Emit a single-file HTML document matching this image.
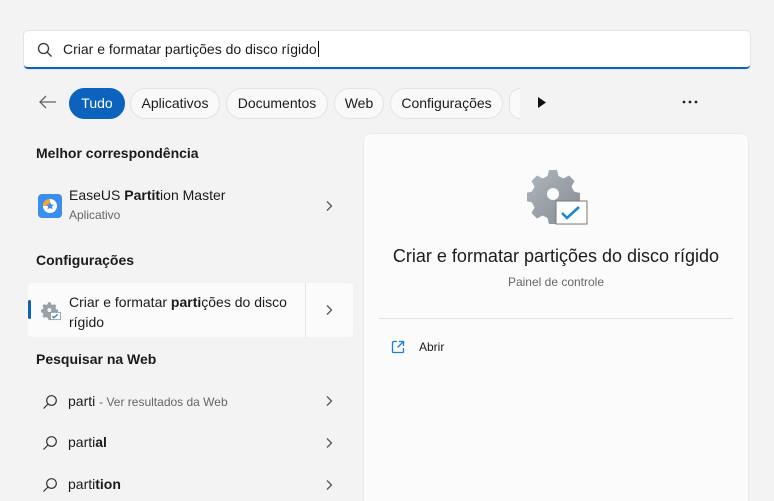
<!DOCTYPE html>
<html style="width:774px;height:501px;overflow:hidden"><head><meta charset="utf-8"><style>
*{margin:0;padding:0;box-sizing:border-box}
body{width:774px;height:501px;overflow:hidden;background:#f3f3f3;font-family:"Segoe UI","Liberation Sans",sans-serif;color:#1b1b1b;position:relative;font-size:13px}
.abs{position:absolute}
.search{left:24px;top:31px;width:726px;height:38px;background:#fff;border-radius:4px;border-bottom:2px solid #0a64b8;box-shadow:0 0 0 1px #e5e5e5}
.search span{position:absolute;left:39px;top:10px;font-size:14px;color:#1b1b1b}
.chip{position:absolute;top:88px;height:31px;border-radius:16px;background:#f9f9f9;border:1px solid #e3e3e3;font-size:14px;line-height:29px;text-align:center}
.h{position:absolute;left:36px;font-size:14px;font-weight:bold;color:#1b1b1b}
.panel{left:363px;top:133px;width:386px;height:368px;background:#fbfbfb;border-radius:8px 8px 0 0;border:1px solid #ececec;border-bottom:none}
.web{position:absolute;left:68px;font-size:14px}
</style></head><body>
<div class="abs search">
<svg class="abs" style="left:13px;top:11px" width="16" height="16" viewBox="0 0 16 16"><circle cx="6.5" cy="6.5" r="5" fill="none" stroke="#333" stroke-width="1.3"/><line x1="10.2" y1="10.2" x2="14.5" y2="14.5" stroke="#333" stroke-width="1.3"/></svg>
<span>Criar e formatar partições do disco rígido<span style="position:static;border-left:1px solid #000;margin-left:1px"></span></span>
</div>
<svg class="abs" style="left:38px;top:94px" width="20" height="16" viewBox="0 0 20 16"><path d="M18 8H2M8 2L2 8l6 6" fill="none" stroke="#666" stroke-width="1.3"/></svg>
<div class="chip" style="left:69px;width:56px;background:#0b63bd;border-color:#0b63bd;color:#fff">Tudo</div>
<div class="chip" style="left:130px;width:90px">Aplicativos</div>
<div class="chip" style="left:226px;width:102px">Documentos</div>
<div class="chip" style="left:334px;width:50px">Web</div>
<div class="chip" style="left:390px;width:113px">Configurações</div>
<div class="chip" style="left:509px;width:11px;border-right:none;border-radius:16px 0 0 16px"></div>
<svg class="abs" style="left:537px;top:96px" width="10" height="13" viewBox="0 0 10 13"><path d="M1 1L9 6.5L1 12Z" fill="#111"/></svg>
<svg class="abs" style="left:682px;top:100px" width="16" height="4" viewBox="0 0 16 4"><circle cx="2" cy="2" r="1.4" fill="#222"/><circle cx="8" cy="2" r="1.4" fill="#222"/><circle cx="14" cy="2" r="1.4" fill="#222"/></svg>

<div class="h" style="top:145px">Melhor correspondência</div>
<svg class="abs" style="left:38px;top:194px" width="24" height="24" viewBox="0 0 24 24"><rect width="24" height="24" rx="4" fill="#3b8ef0"/><circle cx="12" cy="12" r="7" fill="#fff"/><path d="M12 12V5A7 7 0 0 0 5 12Z" fill="#f5a623"/><path d="M12 8l1.2 2.5 2.7.3-2 1.8.6 2.7L12 14l-2.5 1.3.6-2.7-2-1.8 2.7-.3Z" fill="#3b8ef0"/></svg>
<div class="abs" style="left:69px;top:187px;font-size:14px">EaseUS <b>Partit</b>ion Master</div>
<div class="abs" style="left:69px;top:208px;font-size:12px;color:#666">Aplicativo</div>
<svg class="abs" style="left:325px;top:200px" width="8" height="12" viewBox="0 0 8 12"><path d="M2 1.5L6.5 6L2 10.5" fill="none" stroke="#555" stroke-width="1.3"/></svg>

<div class="h" style="top:252px">Configurações</div>
<div class="abs" style="left:28px;top:283px;width:325px;height:54px;background:#fbfbfb;border-radius:4px"></div>
<div class="abs" style="left:305px;top:283px;width:1px;height:54px;background:#e5e5e5"></div>
<div class="abs" style="left:28px;top:300px;width:3px;height:19px;background:#0a64b8;border-radius:2px"></div>
<svg class="abs" style="left:41px;top:301px" width="20" height="20" viewBox="0 0 62 58"><path d="M22 2h8l1.5 6 5 2.5 5.5-3 5.5 5.5-3 5.5 2.5 5 6 1.5v8l-6 1.5-2.5 5 3 5.5-5.5 5.5-5.5-3-5 2.5-1.5 6h-8l-1.5-6-5-2.5-5.5 3-5.5-5.5 3-5.5-2.5-5-6-1.5v-8l6-1.5 2.5-5-3-5.5 5.5-5.5 5.5 3 5-2.5Z" fill="#9aa0a7"/><circle cx="26" cy="26" r="6" fill="#fbfbfb"/><rect x="29" y="33" width="31" height="23" fill="#fff" stroke="#777" stroke-width="2"/><path d="M35 45l5 5 12-11" fill="none" stroke="#1a86d8" stroke-width="4"/></svg>
<div class="abs" style="left:69px;top:292px;font-size:14px;line-height:20px">Criar e formatar <b>parti</b>ções do disco<br>rígido</div>
<svg class="abs" style="left:325px;top:304px" width="8" height="12" viewBox="0 0 8 12"><path d="M2 1.5L6.5 6L2 10.5" fill="none" stroke="#555" stroke-width="1.3"/></svg>

<div class="h" style="top:351px">Pesquisar na Web</div>
<svg class="abs" style="left:42px;top:394px" width="16" height="16" viewBox="0 0 16 16"><circle cx="9.5" cy="6.5" r="4.8" fill="none" stroke="#333" stroke-width="1.2"/><line x1="6" y1="10" x2="1.5" y2="14.5" stroke="#333" stroke-width="1.2"/></svg>
<div class="web" style="top:393px">parti <span style="font-size:12px;color:#666">- Ver resultados da Web</span></div>
<svg class="abs" style="left:325px;top:395px" width="8" height="12" viewBox="0 0 8 12"><path d="M2 1.5L6.5 6L2 10.5" fill="none" stroke="#555" stroke-width="1.3"/></svg>
<svg class="abs" style="left:42px;top:435px" width="16" height="16" viewBox="0 0 16 16"><circle cx="9.5" cy="6.5" r="4.8" fill="none" stroke="#333" stroke-width="1.2"/><line x1="6" y1="10" x2="1.5" y2="14.5" stroke="#333" stroke-width="1.2"/></svg>
<div class="web" style="top:434px">parti<b>al</b></div>
<svg class="abs" style="left:325px;top:437px" width="8" height="12" viewBox="0 0 8 12"><path d="M2 1.5L6.5 6L2 10.5" fill="none" stroke="#555" stroke-width="1.3"/></svg>
<svg class="abs" style="left:42px;top:477px" width="16" height="16" viewBox="0 0 16 16"><circle cx="9.5" cy="6.5" r="4.8" fill="none" stroke="#333" stroke-width="1.2"/><line x1="6" y1="10" x2="1.5" y2="14.5" stroke="#333" stroke-width="1.2"/></svg>
<div class="web" style="top:476px">parti<b>tion</b></div>
<svg class="abs" style="left:325px;top:479px" width="8" height="12" viewBox="0 0 8 12"><path d="M2 1.5L6.5 6L2 10.5" fill="none" stroke="#555" stroke-width="1.3"/></svg>

<div class="abs panel"></div>
<svg class="abs" style="left:527px;top:168px" width="62" height="58" viewBox="0 0 62 58"><defs><linearGradient id="g" x1="0" y1="0" x2="1" y2="1"><stop offset="0" stop-color="#b0b6bd"/><stop offset="1" stop-color="#868c94"/></linearGradient></defs>
<path d="M22 2h8l1.5 6 5 2.5 5.5-3 5.5 5.5-3 5.5 2.5 5 6 1.5v8l-6 1.5-2.5 5 3 5.5-5.5 5.5-5.5-3-5 2.5-1.5 6h-8l-1.5-6-5-2.5-5.5 3-5.5-5.5 3-5.5-2.5-5-6-1.5v-8l6-1.5 2.5-5-3-5.5 5.5-5.5 5.5 3 5-2.5Z" fill="url(#g)"/><circle cx="26" cy="26" r="6" fill="#fbfbfb"/>
<rect x="29" y="33" width="31" height="23" fill="#fff" stroke="#777" stroke-width="1"/><path d="M35 45l5 5 12-11" fill="none" stroke="#1a86d8" stroke-width="2.6"/></svg>
<div class="abs" style="left:363px;top:246px;width:386px;text-align:center;font-size:18px">Criar e formatar partições do disco rígido</div>
<div class="abs" style="left:363px;top:275px;width:386px;text-align:center;font-size:12px;color:#666">Painel de controle</div>
<div class="abs" style="left:379px;top:318px;width:354px;height:1px;background:#e3e3e3"></div>
<svg class="abs" style="left:391px;top:340px" width="14" height="14" viewBox="0 0 14 14"><path d="M6 1.5H2.5a1 1 0 0 0-1 1v9a1 1 0 0 0 1 1h9a1 1 0 0 0 1-1V8M8 1.5h4.5V6M12.5 1.5L6.5 7.5" fill="none" stroke="#1a7fd8" stroke-width="1.3"/></svg>
<div class="abs" style="left:419px;top:340px;font-size:12px">Abrir</div>
</body></html>
